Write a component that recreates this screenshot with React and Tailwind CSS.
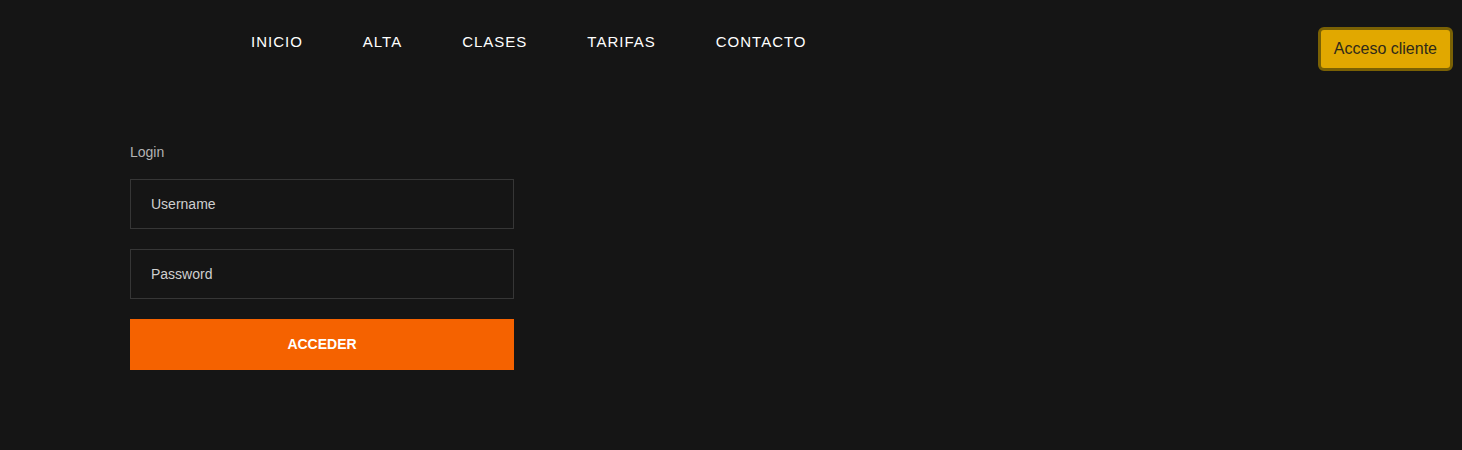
const navItems = ["INICIO", "ALTA", "CLASES", "TARIFAS", "CONTACTO"];

const App = () => {
  return (
    <div className="min-h-[450px] bg-[#151515] font-['Liberation_Sans',Arial,sans-serif]">
      {/* Header */}
      <header className="flex items-start justify-between pl-[221px] pr-[9px]">
        <nav className="flex pt-[33px]">
          {navItems.map((item) => (
            <a
              key={item}
              href="#"
              className="px-[30px] text-[15px] leading-[18px] tracking-[1px] text-white"
            >
              {item}
            </a>
          ))}
        </nav>
        <button className="mt-[27px] h-[44px] rounded-[6px] border-[3px] border-[#7a6104] bg-[#e1a800] px-[13px] text-[16px] text-[#2f2a1a]">
          Acceso cliente
        </button>
      </header>

      {/* Login form */}
      <main className="pl-[130px] pt-[73px]">
        <div className="flex w-[384px] flex-col">
          <label className="text-[14px] leading-[16px] text-[#b3b3b3]">Login</label>
          <input
            type="text"
            placeholder="Username"
            className="mt-[19px] h-[50px] border border-[#363636] bg-transparent px-[20px] text-[14px] text-[#ccc] placeholder:text-[#cfcfcf] outline-none"
          />
          <input
            type="password"
            placeholder="Password"
            className="mt-[20px] h-[50px] border border-[#363636] bg-transparent px-[20px] text-[14px] text-[#ccc] placeholder:text-[#cfcfcf] outline-none"
          />
          <button className="mt-[20px] h-[51px] bg-[#f56200] text-[14px] font-bold text-white">
            ACCEDER
          </button>
        </div>
      </main>
    </div>
  );
};

export default App;
